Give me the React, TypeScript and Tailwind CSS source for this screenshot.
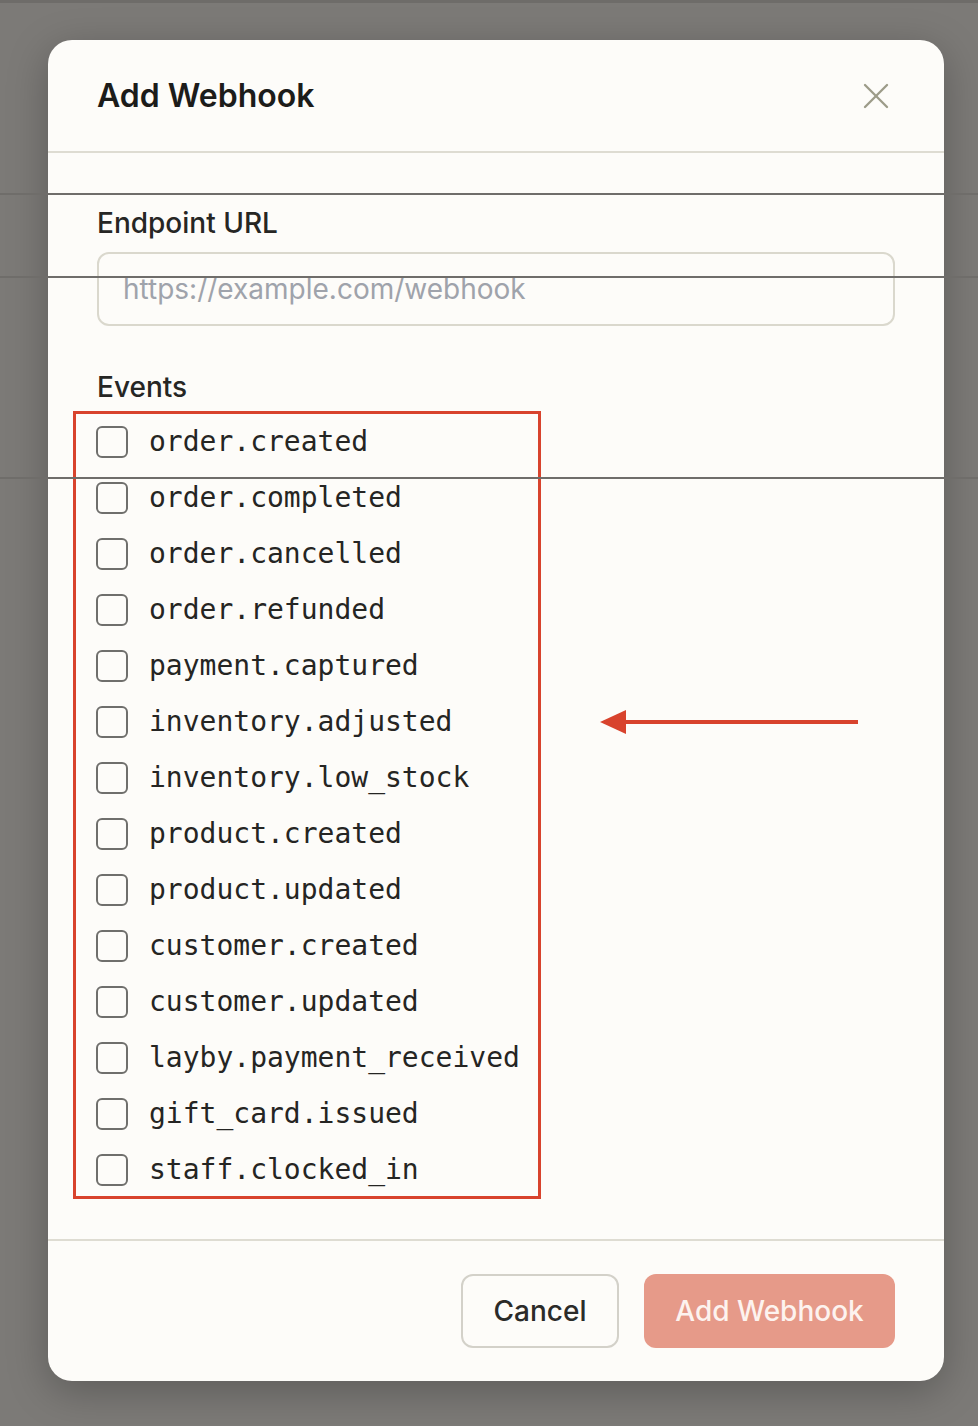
import { X } from 'lucide-react'

const events = [
  'order.created',
  'order.completed',
  'order.cancelled',
  'order.refunded',
  'payment.captured',
  'inventory.adjusted',
  'inventory.low_stock',
  'product.created',
  'product.updated',
  'customer.created',
  'customer.updated',
  'layby.payment_received',
  'gift_card.issued',
  'staff.clocked_in',
]

const EventRow = ({ name }: { name: string }) => (
  <div className="flex items-center gap-[21px] pb-[14px] last:pb-[5px]">
    <span className="h-[32px] w-[32px] shrink-0 rounded-[6px] border-2 border-[#6f6f6c]" />
    <span className="inline-block pt-[2px] pb-[2px] font-['DejaVu_Sans_Mono',monospace] text-[28px] leading-[38px] text-[#252523]">
      {name}
    </span>
  </div>
)

export default function App() {
  return (
    <div className="relative h-[1426px] w-[978px] overflow-hidden bg-[#7c7a77] font-['Inter',sans-serif]">
      {/* page behind the overlay */}
      <div className="absolute inset-x-0 top-0 h-[3px] bg-[#6e6c69]" />
      <div className="absolute inset-x-0 top-[193px] h-[2px] bg-[#6f6d6a]" />
      <div className="absolute inset-x-0 top-[276px] h-[2px] bg-[#6f6d6a]" />
      <div className="absolute inset-x-0 top-[477px] h-[2px] bg-[#6f6d6a]" />

      <div className="pt-[40px] pl-[48px]">
        <div className="w-[896px] rounded-[24px] bg-[#fdfcf9] shadow-[0_10px_40px_rgba(0,0,0,0.25)]">
          {/* header */}
          <div className="flex h-[113px] items-center justify-between border-b-2 border-[#dedcd2] pl-[49px] pr-[46px]">
            <h2 className="text-[32px] font-semibold text-[#1c1c1a]">Add Webhook</h2>
            <X className="h-[44px] w-[44px] text-[#9c9b88]" strokeWidth={1.3} />
          </div>

          {/* body */}
          <div className="px-[49px] pt-[54px] pb-[40px]">
            <label className="block text-[28px] font-medium leading-[32px] text-[#262624]">Endpoint URL</label>
            <input
              className="mt-[13px] block h-[74px] w-full rounded-[12px] border-2 border-[#dad8cd] bg-[#fdfcf9] px-[24px] text-[28px] text-[#262624] outline-none placeholder:text-[#9fa3ab]"
              placeholder="https://example.com/webhook"
            />

            <label className="mt-[45px] block text-[28px] font-medium leading-[32px] text-[#262624]">Events</label>
            <div className="mt-[8px] ml-[-24px] w-[468px] border-[3px] border-[#d8432d] pt-[7px] pl-[20px]">
              {events.map((ev) => (
                <EventRow key={ev} name={ev} />
              ))}
            </div>
          </div>

          {/* footer */}
          <div className="flex justify-end gap-[25px] border-t-2 border-[#dedcd2] pt-[33px] pb-[33px] pr-[49px]">
            <button className="h-[74px] w-[158px] rounded-[12px] border-2 border-[#d3d1c9] bg-[#fdfcf9] text-[28px] font-medium text-[#2b2b29]">
              Cancel
            </button>
            <button className="h-[74px] w-[251px] rounded-[12px] bg-[#e69a89] text-[28px] font-medium text-[#fdf3ef]">
              Add Webhook
            </button>
          </div>
        </div>
      </div>

      {/* pointer arrow */}
      <svg className="absolute left-[550px] top-[710px]" width="320" height="40" viewBox="0 0 320 40">
        <line x1="70" y1="12" x2="308" y2="12" stroke="#d8432d" strokeWidth="4" />
        <polygon points="50,12 76,0 76,24" fill="#d8432d" />
      </svg>
    </div>
  )
}
